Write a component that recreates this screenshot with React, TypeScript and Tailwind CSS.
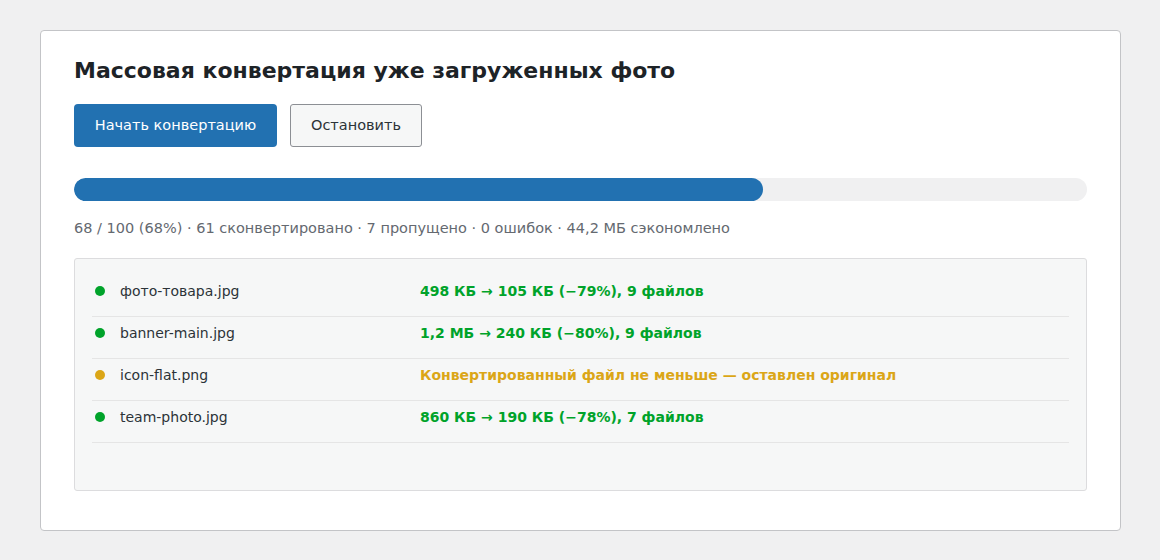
const items = [
  { name: "фото-товара.jpg", status: "498 КБ → 105 КБ (−79%), 9 файлов", ok: true },
  { name: "banner-main.jpg", status: "1,2 МБ → 240 КБ (−80%), 9 файлов", ok: true },
  { name: "icon-flat.png", status: "Конвертированный файл не меньше — оставлен оригинал", ok: false },
  { name: "team-photo.jpg", status: "860 КБ → 190 КБ (−78%), 7 файлов", ok: true },
];

const progress = 68;

export default function App() {
  return (
    <div className="min-h-[560px] bg-[#f0f0f1] pt-[30px] px-[40px] font-['DejaVu_Sans',sans-serif]">
      <div className="w-[1081px] h-[501px] bg-white border border-[#c3c4c7] rounded-[4px] px-[33px] pt-[26px]">
        <h2 className="text-[22px] leading-[28px] font-bold text-[#1d2327]">
          Массовая конвертация уже загруженных фото
        </h2>

        <div className="flex gap-[13px] mt-[19px]">
          <button className="w-[203px] h-[43px] rounded-[4px] bg-[#2271b1] text-white text-[14.5px]">
            Начать конвертацию
          </button>
          <button className="w-[132px] h-[43px] rounded-[3px] border border-[#8c8f94] bg-[#f6f7f7] text-[#2c3338] text-[14.5px]">
            Остановить
          </button>
        </div>

        <div className="mt-[31px] h-[23px] rounded-full bg-[#f0f0f1] overflow-hidden">
          <div className="h-full rounded-full bg-[#2271b1]" style={{ width: `${progress}%` }} />
        </div>

        <p className="mt-[17px] text-[14.5px] leading-[20px] text-[#646970]">
          68 / 100 (68%) · 61 сконвертировано · 7 пропущено · 0 ошибок · 44,2 МБ сэкономлено
        </p>

        <div className="mt-[20px] h-[233px] bg-[#f6f7f7] border border-[#dcdcde] rounded-[3px] px-[17px] pt-[16px]">
          {items.map((it) => (
            <div
              key={it.name}
              className="flex items-center h-[42px] pt-[5px] pb-[15px] px-[3px] border-b border-[#e5e5e5] text-[14px] leading-[20px]"
            >
              <span
                className={`w-[10px] h-[10px] rounded-full shrink-0 ${it.ok ? "bg-[#00a32a]" : "bg-[#dba617]"}`}
              />
              <span className="ml-[15px] w-[300px] text-[#2c3338]">{it.name}</span>
              <span className={`font-bold ${it.ok ? "text-[#00a32a]" : "text-[#dba617]"}`}>{it.status}</span>
            </div>
          ))}
        </div>
      </div>
    </div>
  );
}
